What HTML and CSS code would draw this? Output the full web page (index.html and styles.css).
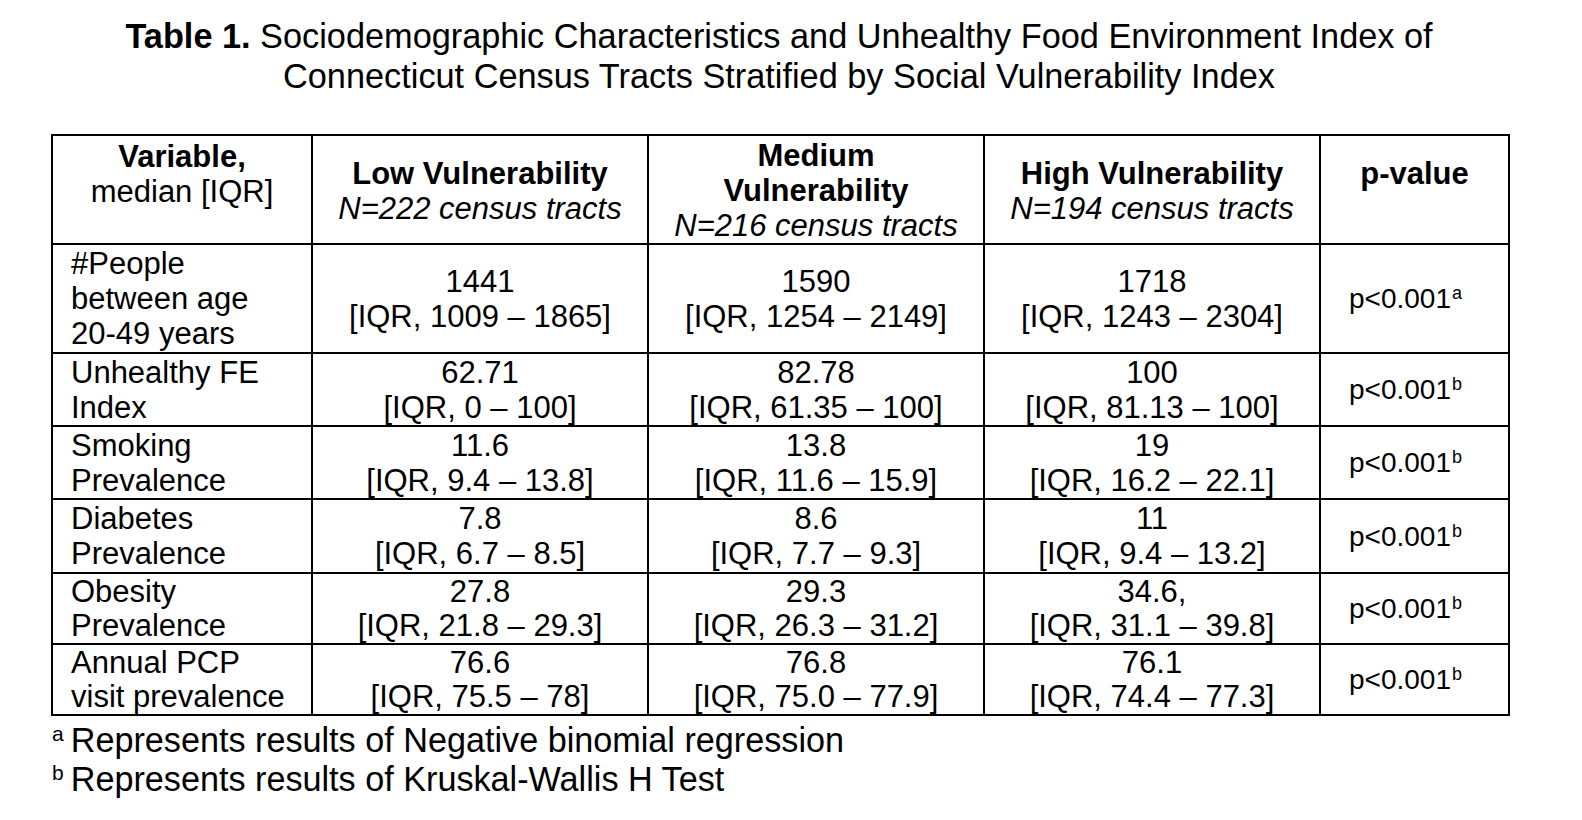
FILE: index.html
```html
<!DOCTYPE html>
<html>
<head>
<meta charset="utf-8">
<link rel="stylesheet" href="styles.css">
</head>
<body>
<div class="page">
  <h1 class="title"><b>Table 1.</b> Sociodemographic Characteristics and Unhealthy Food Environment Index of<br>Connecticut Census Tracts Stratified by Social Vulnerability Index</h1>
  <table class="tbl">
    <colgroup>
      <col class="c1"><col class="c2"><col class="c3"><col class="c4"><col class="c5">
    </colgroup>
    <thead>
      <tr class="hrow">
        <th class="h-var"><b>Variable,</b><br><span class="reg">median [IQR]</span></th>
        <th class="h-grp"><b>Low Vulnerability</b><br><i>N=222 census tracts</i></th>
        <th class="h-mid"><b>Medium<br>Vulnerability</b><br><i>N=216 census tracts</i></th>
        <th class="h-grp"><b>High Vulnerability</b><br><i>N=194 census tracts</i></th>
        <th class="h-p"><b>p-value</b></th>
      </tr>
    </thead>
    <tbody>
      <tr class="r1">
        <td class="var">#People<br>between age<br>20-49 years</td>
        <td class="val">1441<br>[IQR, 1009 – 1865]</td>
        <td class="val">1590<br>[IQR, 1254 – 2149]</td>
        <td class="val">1718<br>[IQR, 1243 – 2304]</td>
        <td class="pv">p&lt;0.001<sup>a</sup></td>
      </tr>
      <tr class="r2">
        <td class="var">Unhealthy FE<br>Index</td>
        <td class="val">62.71<br>[IQR, 0 – 100]</td>
        <td class="val">82.78<br>[IQR, 61.35 – 100]</td>
        <td class="val">100<br>[IQR, 81.13 – 100]</td>
        <td class="pv">p&lt;0.001<sup>b</sup></td>
      </tr>
      <tr class="r3">
        <td class="var">Smoking<br>Prevalence</td>
        <td class="val">11.6<br>[IQR, 9.4 – 13.8]</td>
        <td class="val">13.8<br>[IQR, 11.6 – 15.9]</td>
        <td class="val">19<br>[IQR, 16.2 – 22.1]</td>
        <td class="pv">p&lt;0.001<sup>b</sup></td>
      </tr>
      <tr class="r4">
        <td class="var">Diabetes<br>Prevalence</td>
        <td class="val">7.8<br>[IQR, 6.7 – 8.5]</td>
        <td class="val">8.6<br>[IQR, 7.7 – 9.3]</td>
        <td class="val">11<br>[IQR, 9.4 – 13.2]</td>
        <td class="pv">p&lt;0.001<sup>b</sup></td>
      </tr>
      <tr class="r5">
        <td class="var">Obesity<br>Prevalence</td>
        <td class="val">27.8<br>[IQR, 21.8 – 29.3]</td>
        <td class="val">29.3<br>[IQR, 26.3 – 31.2]</td>
        <td class="val">34.6,<br>[IQR, 31.1 – 39.8]</td>
        <td class="pv">p&lt;0.001<sup>b</sup></td>
      </tr>
      <tr class="r6">
        <td class="var">Annual PCP<br>visit prevalence</td>
        <td class="val">76.6<br>[IQR, 75.5 – 78]</td>
        <td class="val">76.8<br>[IQR, 75.0 – 77.9]</td>
        <td class="val">76.1<br>[IQR, 74.4 – 77.3]</td>
        <td class="pv">p&lt;0.001<sup>b</sup></td>
      </tr>
    </tbody>
  </table>
  <div class="notes">
    <p class="note"><sup>a</sup>Represents results of Negative binomial regression</p>
    <p class="note"><sup>b</sup>Represents results of Kruskal-Wallis H Test</p>
  </div>
</div>
</body>
</html>
```
FILE: styles.css
```css
html, body {
  margin: 0;
  padding: 0;
  background: #ffffff;
}
.page {
  width: 1582px;
  height: 820px;
  color: #000;
  font-family: "Liberation Sans", Arial, sans-serif;
}
.title {
  margin: 0;
  padding-top: 16px;
  padding-right: 24px;
  font-size: 34.3px;
  line-height: 40px;
  font-weight: normal;
  text-align: center;
}
.title b {
  font-weight: bold;
}
.tbl {
  margin-top: 38px;
  margin-left: 51px;
  border-collapse: collapse;
  table-layout: fixed;
  width: 1457px;
  font-size: 31px;
  line-height: 35px;
}
.c1 { width: 260px; }
.c2 { width: 336px; }
.c3 { width: 336px; }
.c4 { width: 336px; }
.c5 { width: 189px; }
.tbl th, .tbl td {
  border: 2px solid #000;
  padding: 0;
  overflow: visible;
  white-space: nowrap;
}
.tbl th {
  font-weight: normal;
  text-align: center;
  vertical-align: top;
}
.hrow { height: 105px; }
.tbl .h-var { padding-top: 3px; }
.tbl .h-grp { padding-top: 20px; }
.tbl .h-mid { padding-top: 2px; }
.tbl .h-p { padding-top: 20px; }
.reg { font-weight: normal; }
.r1 { height: 109px; }
.r2 { height: 73px; }
.r3 { height: 73px; }
.r4 { height: 74px; }
.r5 { height: 71px; }
.r6 { height: 71px; }
.r5 td, .r6 td { line-height: 34px; }
.tbl .var {
  text-align: left;
  padding-left: 18px;
  vertical-align: middle;
}
.tbl .val {
  text-align: center;
  vertical-align: middle;
}
.tbl .pv {
  text-align: center;
  vertical-align: middle;
  font-size: 28px;
  padding-right: 18px;
}
.pv sup {
  font-size: 18px;
  vertical-align: 9px;
  line-height: 0;
  margin-left: 1px;
}
.notes {
  margin-left: 52px;
  margin-top: 5px;
}
.note {
  margin: 0;
  font-size: 34.2px;
  line-height: 39px;
}
.note sup {
  font-size: 21px;
  vertical-align: 11px;
  line-height: 0;
  margin-right: 7px;
}
```
